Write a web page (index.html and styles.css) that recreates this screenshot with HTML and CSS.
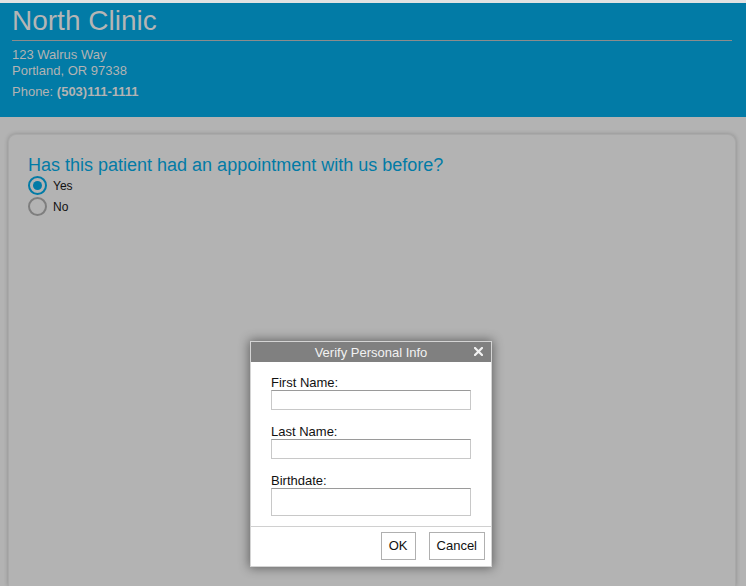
FILE: index.html
```html
<!DOCTYPE html>
<html>
<head>
<meta charset="utf-8">
<title>North Clinic</title>
<link rel="stylesheet" href="styles.css">
</head>
<body>
<div class="topstrip"></div>
<header class="header">
  <h1 class="clinic-name">North Clinic</h1>
  <div class="address">
    <div>123 Walrus Way</div>
    <div>Portland, OR 97338</div>
  </div>
  <div class="phone">Phone: <strong>(503)111-1111</strong></div>
</header>
<main class="main">
  <section class="card">
    <h2 class="question">Has this patient had an appointment with us before?</h2>
    <div class="options">
      <label class="option"><span class="radio checked"></span><span>Yes</span></label>
      <label class="option"><span class="radio"></span><span>No</span></label>
    </div>
  </section>
</main>

<div class="dialog">
  <div class="dialog-title">
    <span>Verify Personal Info</span>
    <span class="close"><svg width="9" height="9" viewBox="0 0 9 9"><path d="M1 1 L8 8 M8 1 L1 8" stroke="#f2f2f2" stroke-width="2.2" stroke-linecap="square"/></svg></span>
  </div>
  <div class="dialog-body">
    <div class="field">
      <div class="field-label">First Name:</div>
      <div class="input"></div>
    </div>
    <div class="field">
      <div class="field-label">Last Name:</div>
      <div class="input"></div>
    </div>
    <div class="field">
      <div class="field-label">Birthdate:</div>
      <div class="input tall"></div>
    </div>
  </div>
  <div class="dialog-footer">
    <div class="btn">OK</div>
    <div class="btn">Cancel</div>
  </div>
</div>
</body>
</html>
```
FILE: styles.css
```css
html, body {
  margin: 0;
  padding: 0;
}
body {
  width: 746px;
  height: 586px;
  overflow: hidden;
  background: #b3b3b3;
  font-family: "Liberation Sans", Arial, sans-serif;
  position: relative;
}
.topstrip {
  height: 3px;
  background: #e2e2e2;
}
.header {
  background: #027ba6;
  padding: 2px 14px 17px 12px;
  color: #b3b3b3;
}
.clinic-name {
  margin: 0;
  font-size: 28px;
  font-weight: normal;
  line-height: 32px;
  padding-bottom: 3px;
  border-bottom: 1px solid #8c8c8c;
  color: #b5b5b5;
}
.address {
  margin-top: 6px;
  font-size: 13px;
  line-height: 16px;
}
.phone {
  margin-top: 5px;
  font-size: 13px;
  line-height: 16px;
}
.phone strong {
  font-weight: bold;
}
.main {
  padding: 17px 10px 0 8px;
}
.card {
  box-sizing: border-box;
  height: 452px;
  background: #b3b3b3;
  border-radius: 8px 8px 0 0;
  border: 1px solid #a9a9a9;
  border-bottom: none;
  box-shadow: 0 0 4px rgba(0, 0, 0, 0.22);
  padding: 20px 19px 0 19px;
}
.question {
  margin: 0;
  font-size: 18px;
  line-height: 21px;
  font-weight: normal;
  color: #027ba6;
}
.options {
  display: flex;
  flex-direction: column;
  gap: 2px;
}
.option {
  display: flex;
  align-items: center;
  gap: 6px;
  font-size: 12px;
  color: #111;
  height: 19px;
}
.radio {
  width: 15px;
  height: 15px;
  border-radius: 50%;
  border: 2.5px solid #7e7e7e;
  display: flex;
  align-items: center;
  justify-content: center;
  flex: none;
}
.radio.checked {
  border-color: #027ba6;
}
.radio.checked::after {
  content: "";
  width: 9px;
  height: 9px;
  border-radius: 50%;
  background: #027ba6;
}
.dialog {
  position: absolute;
  left: 250px;
  top: 341px;
  width: 240px;
  background: #ffffff;
  border: 1px solid #d4d4d4;
  box-shadow: 0 0 10px 1px rgba(0, 0, 0, 0.45);
}
.dialog-title {
  height: 20px;
  background: #808080;
  color: #f2f2f2;
  font-size: 13px;
  line-height: 21px;
  text-align: center;
  position: relative;
}
.close {
  position: absolute;
  right: 8px;
  top: 5px;
  width: 9px;
  height: 9px;
  line-height: 0;
}
.dialog-body {
  padding: 13px 19px 10px 20px;
  display: flex;
  flex-direction: column;
  gap: 14px;
}
.field-label {
  font-size: 13px;
  line-height: 15px;
  color: #111;
}
.input {
  width: 198px;
  height: 18px;
  border: 1px solid #c8c8c8;
  border-top-color: #9a9a9a;
  background: #fff;
}
.input.tall {
  height: 26px;
}
.dialog-footer {
  border-top: 1px solid #d0d0d0;
  padding: 5px 6px 6px 0;
  display: flex;
  justify-content: flex-end;
  gap: 13px;
}
.btn {
  height: 26px;
  line-height: 26px;
  padding: 0 7px;
  border: 1px solid #b0b0b0;
  background: #fff;
  font-size: 13px;
  color: #111;
}
```
